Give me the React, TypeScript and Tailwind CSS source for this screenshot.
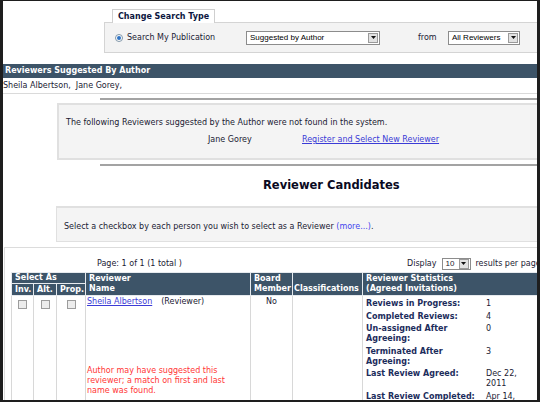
import React from 'react';

// ─── Data ─────────────────────────────────────────────────────────────────────
const stats: [string, string][] = [
  ['Reviews in Progress:', '1'],
  ['Completed Reviews:', '4'],
  ['Un-assigned After Agreeing:', '0'],
  ['Terminated After Agreeing:', '3'],
  ['Last Review Agreed:', 'Dec 22, 2011'],
  ['Last Review Completed:', 'Apr 14,'],
];

// ─── Small widgets ────────────────────────────────────────────────────────────
function DropArrow() {
  return (
    <span className="w-[10px] h-[10px] bg-[#e2e2e2] border border-[#9a9a9a] flex items-center justify-center">
      <svg width="5" height="3" viewBox="0 0 5 3" aria-hidden="true">
        <path d="M0 0h5L2.5 3z" fill="#111" />
      </svg>
    </span>
  );
}

function Select({ label, className }: { label: string; className: string }) {
  return (
    <div
      className={`${className} h-[14px] bg-white border border-[#8c8c8c] flex items-center justify-between pl-[3px] pr-px`}
    >
      <span className="font-['Liberation_Sans',Arial,sans-serif] text-[8px] leading-[10px] text-black">
        {label}
      </span>
      <DropArrow />
    </div>
  );
}

function Checkbox() {
  return <span className="inline-block w-[9px] h-[9px] border border-[#9c9c9c] bg-[#ececec]" />;
}

// ─── Component ────────────────────────────────────────────────────────────────
export default function App() {
  return (
    <div className="w-[540px] h-[402px] overflow-hidden bg-white border-t border-l-[3px] border-r-[3px] border-b-2 border-[#1e1e1e] font-['DejaVu_Sans',Verdana,sans-serif] text-[8px] leading-[10px] text-[#222]">
      <div className="w-[640px]">
        {/* ── Change search type ─────────────────────────────────── */}
        <div className="pl-[101px] pt-[8px]">
          <div className="ml-[8px] relative z-10 -mb-px inline-block h-[14px] px-[5px] bg-white border-t border-l border-r border-[#cfcfcf] font-bold text-[#0d1640] leading-[13px]">
            Change Search Type
          </div>
          <div className="h-[31px] bg-[#f3f3f3] border border-[#d4d4d4] flex items-center">
            <div className="w-[141px] pl-[10px] flex items-center">
              <span className="w-[8px] h-[8px] rounded-full border border-[#8096a8] bg-white flex items-center justify-center">
                <span className="w-[4px] h-[4px] rounded-full bg-[#2f73c4]" />
              </span>
              <span className="ml-[4px] text-[#1a1a33]">Search My Publication</span>
            </div>
            <Select label="Suggested by Author" className="w-[134px]" />
            <span className="ml-[38px] w-[30px] text-[#1a1a33]">from</span>
            <Select label="All Reviewers" className="w-[72px]" />
          </div>
        </div>

        {/* ── Reviewers suggested by author ───────────────────────── */}
        <div className="mt-[11px] h-[14px] bg-[#3d5468] text-white font-bold leading-[14px] pl-[2px]">
          Reviewers Suggested By Author
        </div>
        <div className="h-[16px] leading-[15px] border-b border-[#dadada] text-[#1a1a33]">
          Sheila Albertson,&nbsp; Jane Gorey,
        </div>

        <div className="mt-[4px] ml-[97px] h-[2px] bg-[#a3a3a3]" />
        <div className="mt-[3px] ml-[54px] h-[57px] bg-[#f4f4f4] border-2 border-[#e0e0e0] pl-[7px] pt-[13px] text-[#1a1a33]">
          <div>The following Reviewers suggested by the Author were not found in the system.</div>
          <div className="mt-[7px] flex">
            <span className="ml-[142px] w-[94px]">Jane Gorey</span>
            <span className="text-[#3b3bd6] underline">Register and Select New Reviewer</span>
          </div>
        </div>
        <div className="mt-[4px] ml-[97px] h-[2px] bg-[#a3a3a3]" />

        {/* ── Reviewer candidates ─────────────────────────────────── */}
        <div className="mt-[12px] ml-[260px] text-[11.5px] leading-[14px] font-bold text-[#0a0a22]">
          Reviewer Candidates
        </div>
        <div className="mt-[14px] ml-[53px] h-[36px] bg-[#f4f4f4] border-t-2 border-b border-l border-[#e0e0e0] pl-[7px] pt-[14px] text-[#1a1a33]">
          Select a checkbox by each person you wish to select as a Reviewer{' '}
          <span className="text-[#4545ee]">(more...)</span>.
        </div>

        <div className="mt-[5px] ml-px border border-[#dcdcdc] h-[200px]">
          <div className="pt-[9px] mb-[2px] h-[22px] flex items-start">
            <div className="h-[13px] flex items-center pl-[92px] w-[402px] text-[#1a1a33]">
              Page: 1 of 1 (1 total )
            </div>
            <div className="h-[13px] flex items-center text-[#1a1a33]">
              <span>Display</span>
              <div className="ml-[5px] w-[29px] h-[12px] bg-white border border-[#8c8c8c] flex items-center justify-between pl-[3px] pr-px">
                <span className="font-['Liberation_Sans',Arial,sans-serif] text-[8px]">10</span>
                <DropArrow />
              </div>
              <span className="ml-[5px] whitespace-nowrap">results per page</span>
            </div>
          </div>

          <table className="ml-[6px] table-fixed border-collapse w-[590px]">
            <colgroup>
              <col className="w-[22px]" />
              <col className="w-[23px]" />
              <col className="w-[29px]" />
              <col className="w-[165px]" />
              <col className="w-[42px]" />
              <col className="w-[70px]" />
              <col className="w-[239px]" />
            </colgroup>
            <thead className="bg-[#3d5468] text-white font-bold">
              <tr className="h-[11px]">
                <th colSpan={3} className="p-0 pl-[3px] text-left align-middle border border-[#e6eaee] font-bold">
                  Select As
                </th>
                <th rowSpan={2} className="p-0 pl-[3px] pb-px text-left align-bottom border border-[#e6eaee] font-bold">
                  Reviewer
                  <br />
                  Name
                </th>
                <th rowSpan={2} className="p-0 pl-[3px] pb-px text-left align-bottom border border-[#e6eaee] font-bold">
                  Board
                  <br />
                  Member
                </th>
                <th rowSpan={2} className="p-0 pl-px pb-px text-left align-bottom border border-[#e6eaee] font-bold whitespace-nowrap">
                  Classifications
                </th>
                <th rowSpan={2} className="p-0 pl-[3px] pb-px text-left align-bottom border border-[#e6eaee] font-bold">
                  Reviewer Statistics
                  <br />
                  (Agreed Invitations)
                </th>
              </tr>
              <tr className="h-[12px]">
                <th className="p-0 pl-[3px] text-left align-middle border border-[#e6eaee] font-bold">Inv.</th>
                <th className="p-0 pl-[3px] text-left align-middle border border-[#e6eaee] font-bold">Alt.</th>
                <th className="p-0 pl-[3px] text-left align-middle border border-[#e6eaee] font-bold">Prop.</th>
              </tr>
            </thead>
            <tbody>
              <tr>
                <td className="p-0 pt-[4px] text-center align-top border border-[#d8d8d8]">
                  <Checkbox />
                </td>
                <td className="p-0 pt-[4px] text-center align-top border border-[#d8d8d8]">
                  <Checkbox />
                </td>
                <td className="p-0 pt-[4px] text-center align-top border border-[#d8d8d8]">
                  <Checkbox />
                </td>
                <td className="p-0 pl-px pr-[2px] pt-px align-top border border-[#d8d8d8] h-[120px]">
                  <div>
                    <span className="text-[#3b3bd6] underline">Sheila Albertson</span>
                    <span className="ml-[9px] text-[#1a1a33]">(Reviewer)</span>
                  </div>
                  <div className="mt-[59px] text-[#ff3535]">
                    Author may have suggested this reviewer; a match on first and last name was found.
                  </div>
                </td>
                <td className="p-0 pt-px text-center align-top border border-[#d8d8d8] text-[#1a1a33]">No</td>
                <td className="p-0 align-top border border-[#d8d8d8]" />
                <td className="p-0 pl-[3px] pt-[2px] align-top border border-[#d8d8d8]">
                  <table className="border-collapse">
                    <tbody>
                      {stats.map(([label, value]) => (
                        <tr key={label}>
                          <td className="p-0 py-[1.25px] w-[120px] pr-[4px] align-top font-bold text-[#1c2d5c]">
                            {label}
                          </td>
                          <td className="p-0 py-[1.25px] w-[44px] align-top text-[#1a1a33]">{value}</td>
                        </tr>
                      ))}
                    </tbody>
                  </table>
                </td>
              </tr>
            </tbody>
          </table>
        </div>
      </div>
    </div>
  );
}
